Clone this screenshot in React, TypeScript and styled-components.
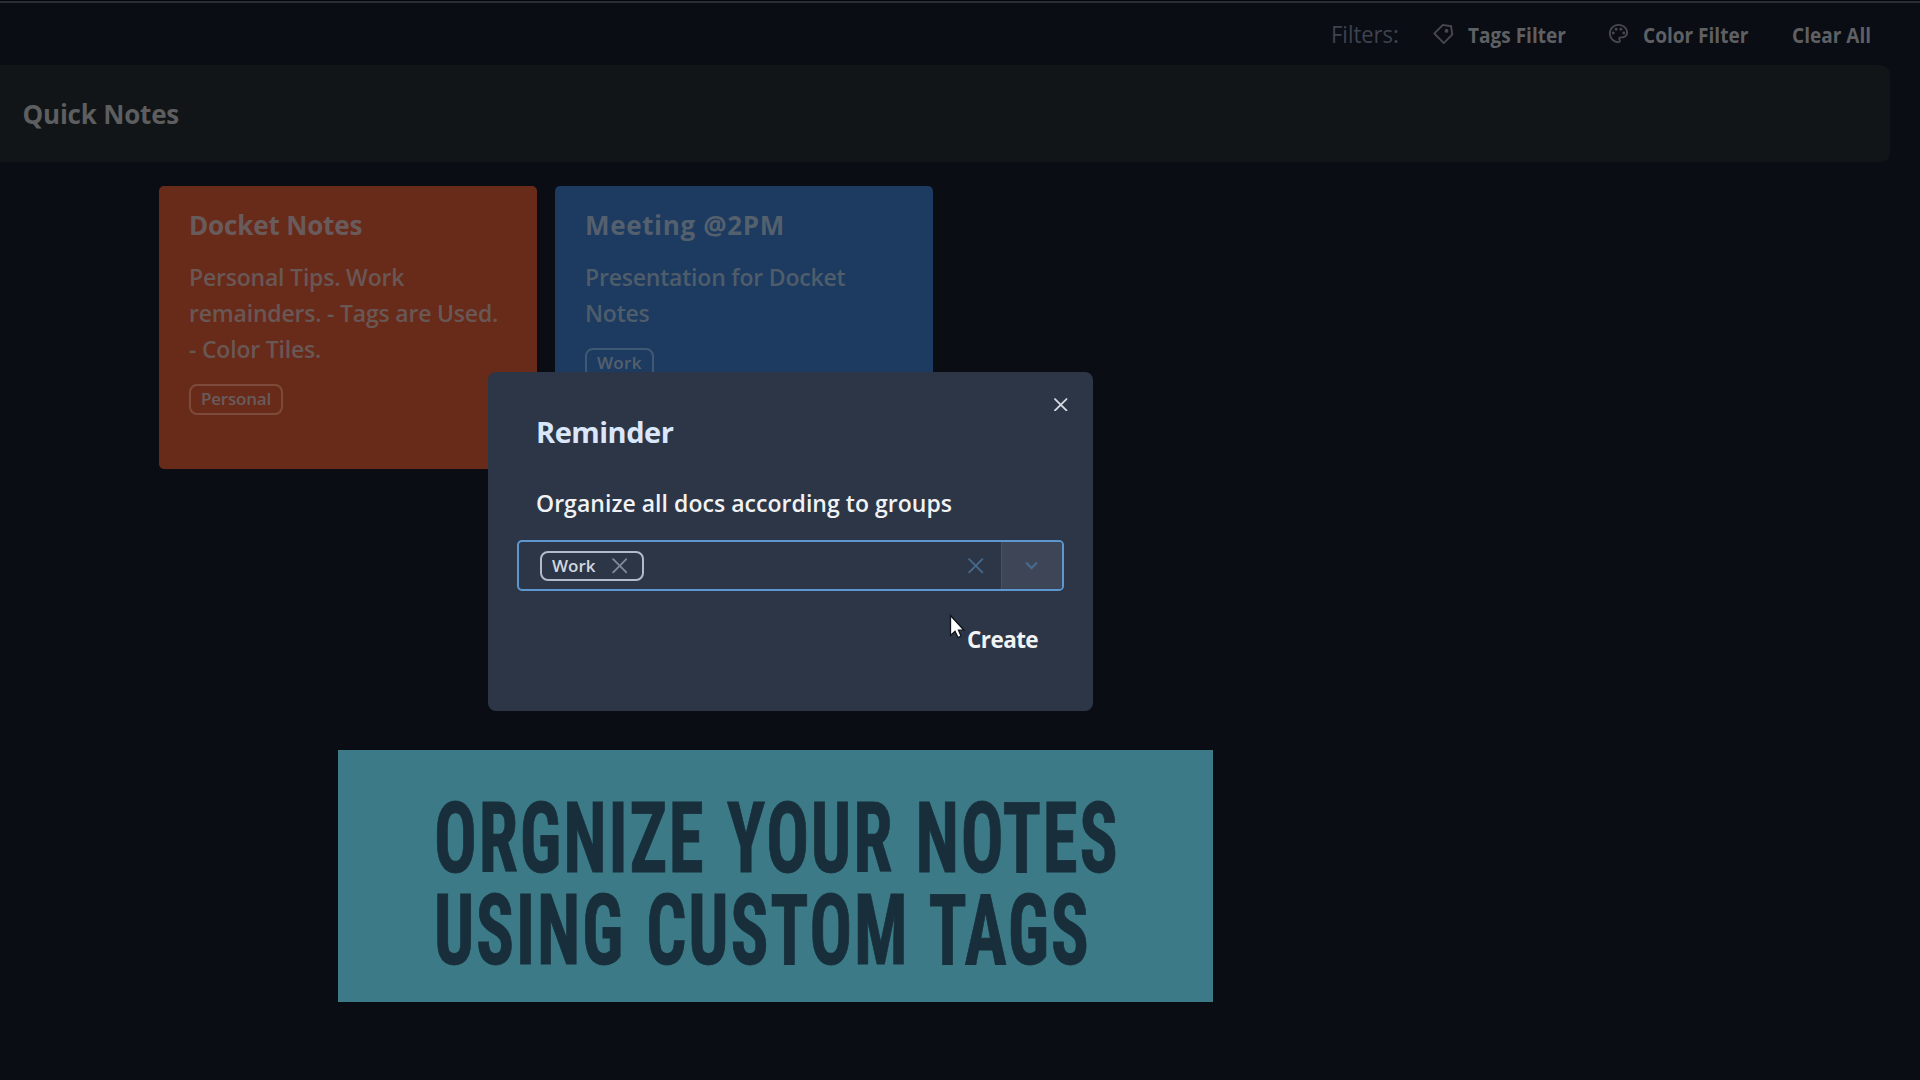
import React from 'react';
import styled, { createGlobalStyle } from 'styled-components';
import { RiPriceTag3Line } from 'react-icons/ri';
import { MdOutlinePalette } from 'react-icons/md';

const GlobalStyle = createGlobalStyle`
  * { box-sizing: border-box; }
  html, body { margin: 0; background: #0a0d14; }
  body { font-family: "Open Sans", "Noto Sans", sans-serif; overflow: hidden; }
  h1, h2, p { margin: 0; }
  button { font: inherit; color: inherit; background: none; border: 0; padding: 0; }
`;

const Page = styled.div`
  position: relative;
  width: 1920px;
  height: 1080px;
  overflow: hidden;
  background: #0a0d14;
`;

const TopEdge = styled.div`
  height: 3px;
  border-top: 1px solid #05060b;
  background: #2b2d35;
`;

const Toolbar = styled.header`
  display: flex;
  align-items: center;
  height: 62px;
  padding: 0 0 0 1331px;
  font-size: 22px;
  font-weight: 700;
  line-height: 36px;
  white-space: nowrap;
  color: #5f6063;
`;

const FiltersLabel = styled.span`
  width: 102.5px;
  font-size: 23px;
  font-weight: 400;
  color: #3f434f;
  transform: scaleX(0.955);
  transform-origin: left;
`;

const FilterButton = styled.button<{ $width?: number; $gap?: number }>`
  display: flex;
  align-items: center;
  gap: ${(p) => p.$gap ?? 0}px;
  width: ${(p) => (p.$width ? `${p.$width}px` : 'auto')};

  svg {
    flex: none;
    width: 23px;
    height: 23px;
    margin: -2px 0 0 -2px;
    color: #46484c;
  }
`;

const FilterText = styled.span`
  transform: scaleX(0.865);
  transform-origin: left;
`;

const SectionBar = styled.section`
  display: flex;
  align-items: center;
  width: 1890px;
  height: 97px;
  padding: 0 0 0 22.5px;
  border-radius: 0 9px 9px 0;
  background: #111517;
`;

const SectionTitle = styled.h1`
  font-size: 26px;
  font-weight: 700;
  line-height: 36px;
  letter-spacing: -0.2px;
  color: #5d5e5f;
`;

const Notes = styled.main`
  display: flex;
  gap: 18px;
  padding: 24px 0 0 159px;
`;

const Card = styled.article<{ $bg: string; $ink: string }>`
  width: 378px;
  height: 283px;
  padding: 21px 0 0 30px;
  border-radius: 5px;
  background: ${(p) => p.$bg};
  color: ${(p) => p.$ink};
`;

const CardTitle = styled.h2<{ $tracking?: number }>`
  font-size: 26px;
  font-weight: 700;
  line-height: 36px;
  letter-spacing: ${(p) => p.$tracking ?? -0.15}px;
`;

const CardBody = styled.p`
  margin-top: 15.5px;
  font-size: 23px;
  font-weight: 600;
  letter-spacing: -0.2px;
  line-height: 36.2px;
  opacity: 0.92;
`;

const Chip = styled.span<{ $line: string; $tracking?: number }>`
  display: inline-flex;
  align-items: center;
  height: 30.5px;
  padding: 0 10px;
  border: 2px solid ${(p) => p.$line};
  border-radius: 8px;
  font-size: 17px;
  font-weight: 600;
  letter-spacing: ${(p) => p.$tracking ?? 0}px;
  line-height: 26px;
`;

const CardChip = styled(Chip)`
  display: flex;
  width: fit-content;
  margin: 17px 0 0;
`;

const Dialog = styled.div`
  position: absolute;
  left: 488px;
  top: 372px;
  display: flex;
  flex-direction: column;
  width: 604.5px;
  height: 338.5px;
  padding: 40px 28.5px 0;
  border-radius: 8px;
  background: #2c3647;
  color: #f1f2f4;
`;

const CloseButton = styled.button`
  position: absolute;
  top: 25.5px;
  right: 25px;
  display: flex;
  color: #d6dae1;
`;

const DialogTitle = styled.h2`
  padding-left: 19.5px;
  font-size: 29px;
  font-weight: 700;
  letter-spacing: -0.5px;
  line-height: 40px;
  color: #dae7fb;
`;

const DialogText = styled.p`
  margin-top: 33px;
  padding-left: 19.5px;
  font-size: 23px;
  font-weight: 600;
  letter-spacing: 0.04px;
  line-height: 36px;
  white-space: nowrap;
`;

const Select = styled.div`
  display: flex;
  align-items: stretch;
  width: 547.5px;
  height: 51.5px;
  margin-top: 18.5px;
  border: 2px solid #5c97d0;
  border-radius: 5px;
  overflow: hidden;
`;

const SelectValue = styled.div`
  display: flex;
  flex: 1;
  align-items: center;
  padding: 1px 17px 0 21.5px;
`;

const SelectedChip = styled(Chip)`
  gap: 16px;
  padding-right: 15px;
  color: #d2d7df;
`;

const ClearSlot = styled.span`
  display: flex;
  margin-left: auto;
  color: #46688a;
`;

const Dropdown = styled.button`
  display: flex;
  align-items: center;
  justify-content: center;
  width: 61.5px;
  border-left: 1px solid #4a5161;
  background: #3d4556;
  color: #46688a;
`;

const CreateButton = styled.button`
  align-self: flex-end;
  margin: 30.5px 26px 0 0;
  font-size: 22.5px;
  font-weight: 700;
  letter-spacing: -0.6px;
  line-height: 36px;
`;

const Banner = styled.aside`
  position: absolute;
  left: 338px;
  top: 749.5px;
  width: 875px;
  height: 252px;
  padding: 43px 0 0 96px;
  background: #3b7a86;
`;

const BannerLine = styled.p<{ $scale: number }>`
  width: max-content;
  font-family: Roboto, sans-serif;
  font-size: 98px;
  font-weight: 700;
  font-stretch: 75%;
  letter-spacing: 2.5px;
  word-spacing: 4.3px;
  line-height: 92.5px;
  white-space: nowrap;
  color: #182f3b;
  -webkit-text-stroke: 0.9px #182f3b;
  transform: scaleX(${(p) => p.$scale});
  transform-origin: left;
`;

const Pointer = styled.svg`
  position: absolute;
  left: 949px;
  top: 613px;
`;

const Cross = ({ size, color, weight = 2 }: { size: number; color?: string; weight?: number }) => (
  <svg width={size} height={size} viewBox="0 0 16 16" fill="none" stroke={color ?? 'currentColor'} strokeWidth={weight} strokeLinecap="round">
    <path d="M1.2 1.2 14.8 14.8M14.8 1.2 1.2 14.8" />
  </svg>
);

export default function App() {
  return (
    <>
      <GlobalStyle />
      <Page>
        <TopEdge />
        <Toolbar>
          <FiltersLabel>Filters:</FiltersLabel>
          <FilterButton $width={175} $gap={13}><RiPriceTag3Line /><FilterText>Tags Filter</FilterText></FilterButton>
          <FilterButton $width={183.5} $gap={13}><MdOutlinePalette /><FilterText>Color Filter</FilterText></FilterButton>
          <FilterButton><FilterText>Clear All</FilterText></FilterButton>
        </Toolbar>
        <SectionBar><SectionTitle>Quick Notes</SectionTitle></SectionBar>
        <Notes>
          <Card $bg="#692b19" $ink="#695b5c">
            <CardTitle>Docket Notes</CardTitle>
            <CardBody>Personal Tips. Work<br />remainders. - Tags are Used.<br />- Color Tiles.</CardBody>
            <CardChip $line="#7d4b3b" $tracking={-0.2}>Personal</CardChip>
          </Card>
          <Card $bg="#1d3b60" $ink="#54606d">
            <CardTitle $tracking={0.65}>Meeting @2PM</CardTitle>
            <CardBody>Presentation for Docket<br />Notes</CardBody>
            <CardChip $line="#3f5873" $tracking={0.3}>Work</CardChip>
          </Card>
        </Notes>

        <Dialog>
          <CloseButton aria-label="Close"><Cross size={13.5} weight={2.1} /></CloseButton>
          <DialogTitle>Reminder</DialogTitle>
          <DialogText>Organize all docs according to groups</DialogText>
          <Select>
            <SelectValue>
              <SelectedChip $line="#b3bbca">Work<Cross size={15.5} color="#7d8897" /></SelectedChip>
              <ClearSlot><Cross size={15.5} /></ClearSlot>
            </SelectValue>
            <Dropdown aria-label="Open">
              <svg width="13" height="9" viewBox="0 0 13 9" fill="none" stroke="currentColor" strokeWidth="2.4">
                <path d="M1 1.5 6.5 7 12 1.5" />
              </svg>
            </Dropdown>
          </Select>
          <CreateButton>Create</CreateButton>
        </Dialog>

        <Banner>
          <BannerLine $scale={0.7245}>ORGNIZE YOUR NOTES</BannerLine>
          <BannerLine $scale={0.7207}>USING CUSTOM TAGS</BannerLine>
        </Banner>

        <Pointer width="17" height="26" viewBox="0 0 17 26">
          <path d="M1.5 2.5V22.5L6 18.3 9 24.5 12 23 9.5 17.2H15Z" fill="#fff" stroke="#10151d" strokeWidth="1.3" />
        </Pointer>
      </Page>
    </>
  );
}
